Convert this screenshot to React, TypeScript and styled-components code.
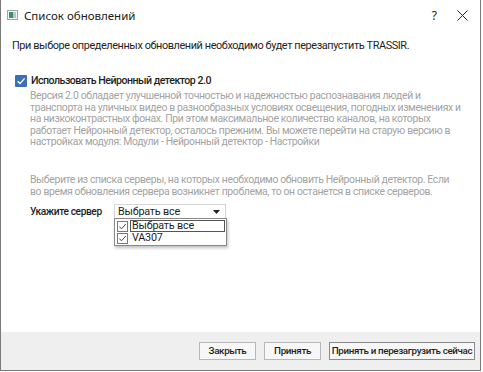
import React from "react";
import styled, { createGlobalStyle } from "styled-components";

const GlobalStyle = createGlobalStyle`
  html, body {
    margin: 0;
    padding: 0;
    background: #ffffff;
  }
  body {
    font-family: Roboto, "Liberation Sans", sans-serif;
  }
`;

const versionLines = [
  "Версия 2.0 обладает улучшенной точностью и надежностью распознавания людей и",
  "транспорта на уличных видео в разнообразных условиях освещения, погодных изменениях и",
  "на низкоконтрастных фонах. При этом максимальное количество каналов, на которых",
  "работает Нейронный детектор, осталось прежним. Вы можете перейти на старую версию в",
  "настройках модуля: Модули - Нейронный детектор - Настройки",
];

const serverLines = [
  "Выберите из списка серверы, на которых необходимо обновить Нейронный детектор. Если",
  "во время обновления сервера возникнет проблема, то он останется в списке серверов.",
];

const servers = [
  { name: "Выбрать все", focused: true },
  { name: "VA307", focused: false },
];

const WindowIcon = () => (
  <svg width="11" height="10" viewBox="0 0 11 10">
    <rect x="0.5" y="0.5" width="10" height="9" fill="#f4f6f8" stroke="#9aa4ad" />
    <rect x="2" y="2" width="4" height="6" fill="#3f8f6a" />
    <rect x="6" y="2" width="3" height="6" fill="#b9c6d2" />
  </svg>
);

const CheckedBox = () => (
  <svg width="12" height="12" viewBox="0 0 12 12">
    <rect x="0" y="0" width="12" height="12" rx="1" fill="#3b6fb8" />
    <path d="M2.6 6.2 L5 8.6 L9.6 3.4" fill="none" stroke="#ffffff" strokeWidth="1.4" />
  </svg>
);

const SmallCheck = () => (
  <svg width="11" height="11" viewBox="0 0 11 11">
    <rect x="0.5" y="0.5" width="10" height="10" fill="#ffffff" stroke="#7a7a7a" />
    <path d="M2.4 5.6 L4.5 7.8 L8.8 3" fill="none" stroke="#444" strokeWidth="1" />
  </svg>
);

const App = () => {
  return (
    <>
      <GlobalStyle />
      <Window>
        <TitleBar>
          <TitleLeft>
            <WindowIcon />
            <TitleText>Список обновлений</TitleText>
          </TitleLeft>
          <TitleButtons>
            <Help>?</Help>
            <svg width="11" height="11" viewBox="0 0 11 11">
              <path d="M0.5 0.5 L10.5 10.5 M10.5 0.5 L0.5 10.5" stroke="#222" strokeWidth="1" />
            </svg>
          </TitleButtons>
        </TitleBar>
        <Body>
          <Intro>При выборе определенных обновлений необходимо будет перезапустить TRASSIR.</Intro>
          <CheckRow>
            <CheckedBox />
            <CheckLabel>Использовать Нейронный детектор 2.0</CheckLabel>
          </CheckRow>
          <Hint>
            {versionLines.map((l) => (
              <Line key={l}>{l}</Line>
            ))}
          </Hint>
          <Hint $top={26}>
            {serverLines.map((l) => (
              <Line key={l}>{l}</Line>
            ))}
          </Hint>
          <ServerRow>
            <ServerLabel>Укажите сервер</ServerLabel>
            <ComboWrap>
              <Combo>
                <span>Выбрать все</span>
                <svg width="7" height="4" viewBox="0 0 7 4">
                  <path d="M0 0 L7 0 L3.5 4 Z" fill="#222" />
                </svg>
              </Combo>
              <Popup>
                {servers.map((s) => (
                  <PopupItem key={s.name}>
                    <SmallCheck />
                    <ItemText $focused={s.focused}>{s.name}</ItemText>
                  </PopupItem>
                ))}
              </Popup>
            </ComboWrap>
          </ServerRow>
        </Body>
        <Footer>
          <Button $w={57}>Закрыть</Button>
          <Button $w={57}>Принять</Button>
          <Button $w={146} $dark>
            Принять и перезагрузить сейчас
          </Button>
        </Footer>
      </Window>
    </>
  );
};

const Window = styled.div`
  width: 481px;
  height: 371px;
  border-left: 1px solid #7a7a7a;
  border-right: 1px solid #7a7a7a;
  border-bottom: 1px solid #7a7a7a;
  box-sizing: border-box;
  display: flex;
  flex-direction: column;
  background: #ffffff;
`;

const TitleBar = styled.div`
  height: 30px;
  display: flex;
  align-items: center;
  justify-content: space-between;
  padding-left: 6px;
`;

const TitleLeft = styled.div`
  display: flex;
  align-items: center;
  gap: 6px;
`;

const TitleText = styled.span`
  font-family: "Noto Sans", sans-serif;
  font-size: 11.5px;
  color: #1a1a1a;
`;

const TitleButtons = styled.div`
  display: flex;
  align-items: center;
  gap: 20px;
  padding-right: 12px;
`;

const Help = styled.span`
  font-family: "Noto Sans", sans-serif;
  font-size: 12px;
  color: #222;
`;

const Body = styled.div`
  flex: 1;
  display: flex;
  flex-direction: column;
  padding: 9px 12px 0 11px;
`;

const Intro = styled.div`
  font-size: 10.9px;
  letter-spacing: -0.4px;
  color: #1e1e1e;
  line-height: 14px;
  white-space: nowrap;
`;

const CheckRow = styled.div`
  display: flex;
  align-items: center;
  gap: 4px;
  margin-top: 21px;
  padding-left: 3px;
`;

const CheckLabel = styled.span`
  font-size: 10.6px;
  letter-spacing: -0.5px;
  font-weight: 500;
  color: #1e1e1e;
`;

const Hint = styled.div<{ $top?: number }>`
  margin-top: ${(p) => p.$top ?? 3}px;
  padding-left: 18px;
  font-size: 10.4px;
  letter-spacing: -0.35px;
  line-height: 11.6px;
  color: #a3a3a3;
`;

const Line = styled.div`
  white-space: nowrap;
`;

const ServerRow = styled.div`
  display: flex;
  align-items: flex-start;
  margin-top: 7px;
  padding-left: 18px;
`;

const ServerLabel = styled.span`
  width: 84px;
  font-size: 10.2px;
  letter-spacing: -0.4px;
  font-weight: 500;
  color: #1e1e1e;
  line-height: 16px;
  white-space: nowrap;
`;

const ComboWrap = styled.div`
  position: relative;
`;

const Combo = styled.div`
  width: 112px;
  height: 15px;
  box-sizing: border-box;
  border: 1px solid #d6d6d6;
  display: flex;
  align-items: center;
  justify-content: space-between;
  padding: 0 5px 0 3px;
  font-size: 10.8px;
  letter-spacing: -0.2px;
  color: #1e1e1e;
`;

const Popup = styled.div`
  position: absolute;
  left: 0;
  top: 14px;
  width: 113px;
  box-sizing: border-box;
  background: #ffffff;
  border: 1px solid #8a8a8a;
  box-shadow: 1px 2px 3px rgba(0, 0, 0, 0.25);
  padding: 1px 1px 1px 2px;
  display: flex;
  flex-direction: column;
`;

const PopupItem = styled.div`
  display: flex;
  align-items: center;
  gap: 2px;
  height: 12px;
`;

const ItemText = styled.span<{ $focused: boolean }>`
  flex: 1;
  font-size: 10.8px;
  letter-spacing: -0.2px;
  line-height: 10px;
  color: #1e1e1e;
  padding-left: 1px;
  border: 1px solid ${(p) => (p.$focused ? "#555" : "transparent")};
`;

const Footer = styled.div`
  height: 37px;
  background: #efefef;
  display: flex;
  align-items: center;
  justify-content: flex-end;
  gap: 8px;
  padding: 0 5px 1px 0;
`;

const Button = styled.div<{ $w: number; $dark?: boolean }>`
  height: 18px;
  width: ${(p) => p.$w}px;
  box-sizing: border-box;
  display: flex;
  align-items: center;
  justify-content: center;
  background: #f7f7f7;
  border: 1px solid ${(p) => (p.$dark ? "#8a8a8a" : "#b8b8b8")};
  font-size: 9.8px;
  letter-spacing: -0.35px;
  font-weight: 500;
  color: #1e1e1e;
  white-space: nowrap;
  overflow: hidden;
`;

export default App;
